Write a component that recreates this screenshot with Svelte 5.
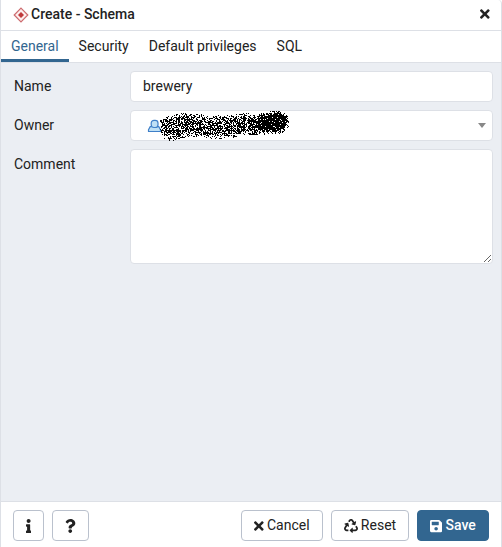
<script>
  const tabs = ['General', 'Security', 'Default privileges', 'SQL'];
  let active = $state('General');
  let name = $state('brewery');
  let comment = $state('');

  const icons = {
    close: { w: 352, d: 'M242.72 256l100.07-100.07c12.28-12.28 12.28-32.19 0-44.48l-22.24-22.24c-12.28-12.28-32.19-12.28-44.48 0L176 189.28 75.93 89.21c-12.28-12.28-32.19-12.28-44.48 0L9.21 111.45c-12.28 12.28-12.28 32.19 0 44.48L109.28 256 9.21 356.07c-12.28 12.28-12.28 32.19 0 44.48l22.24 22.24c12.28 12.28 32.2 12.28 44.48 0L176 322.72l100.07 100.07c12.28 12.28 32.2 12.28 44.48 0l22.24-22.24c12.28-12.28 12.28-32.19 0-44.48L242.72 256z' },
    save: { w: 448, d: 'M433.941 129.941l-83.882-83.882A48 48 0 0 0 316.118 32H48C21.49 32 0 53.49 0 80v352c0 26.51 21.49 48 48 48h352c26.51 0 48-21.49 48-48V163.882a48 48 0 0 0-14.059-33.941zM224 416c-35.346 0-64-28.654-64-64 0-35.346 28.654-64 64-64s64 28.654 64 64c0 35.346-28.654 64-64 64zm96-304.52V212c0 6.627-5.373 12-12 12H76c-6.627 0-12-5.373-12-12V108c0-6.627 5.373-12 12-12h228.52c3.183 0 6.235 1.264 8.485 3.515l3.48 3.48A11.996 11.996 0 0 1 320 111.48z' },
    info: { w: 192, d: 'M20 424.229h20V279.771H20c-11.046 0-20-8.954-20-20V212c0-11.046 8.954-20 20-20h112c11.046 0 20 8.954 20 20v212.229h20c11.046 0 20 8.954 20 20V492c0 11.046-8.954 20-20 20H20c-11.046 0-20-8.954-20-20v-47.771c0-11.046 8.954-20 20-20zM96 0C56.235 0 24 32.235 24 72s32.235 72 72 72 72-32.235 72-72S135.764 0 96 0z' },
    help: { w: 384, d: 'M202.021 0C122.202 0 70.503 32.703 29.914 91.026c-7.363 10.58-5.093 25.086 5.178 32.874l43.138 32.709c10.373 7.865 25.132 6.026 33.253-4.148 25.049-31.381 43.63-49.449 82.757-49.449 30.764 0 68.816 19.799 68.816 49.631 0 22.552-18.617 34.134-48.993 51.164-35.423 19.86-82.299 44.576-82.299 106.405V320c0 13.255 10.745 24 24 24h72.471c13.255 0 24-10.745 24-24v-5.773c0-42.86 125.268-44.645 125.268-160.627C377.504 66.256 286.902 0 202.021 0zM192 373.459c-38.196 0-69.271 31.075-69.271 69.271 0 38.195 31.075 69.27 69.271 69.27s69.271-31.075 69.271-69.271-31.075-69.27-69.271-69.27z' },
    reset: { w: 512, d: 'M184.561 261.903c3.232 13.997-12.123 24.635-24.068 17.168l-40.736-25.455-50.867 81.402C55.606 356.273 70.96 384 96.012 384H148c6.627 0 12 5.373 12 12v40c0 6.627-5.373 12-12 12H96.115c-75.334 0-121.302-83.048-81.408-146.88l50.822-81.388-40.725-25.448c-12.081-7.547-8.966-25.961 4.879-29.158l110.237-25.45c8.611-1.988 17.201 3.381 19.189 11.99l25.452 110.237zm98.561-182.915l41.289 66.076-40.74 25.457c-12.051 7.528-9 25.953 4.879 29.158l110.237 25.45c8.672 1.999 17.215-3.438 19.189-11.99l25.45-110.237c3.197-13.844-11.99-24.719-24.068-17.168l-40.687 25.424-41.263-66.082c-37.521-60.033-125.209-60.171-162.816 0l-17.963 28.766c-3.51 5.62-1.8 13.021 3.82 16.533l33.919 21.195c5.62 3.512 13.024 1.803 16.536-3.817l17.961-28.743c12.712-20.341 41.973-19.676 54.257-.022zM497.288 301.12l-27.515-44.065c-3.511-5.623-10.916-7.334-16.538-3.821l-33.861 21.159c-5.62 3.512-7.33 10.915-3.818 16.536l27.564 44.112c13.257 21.211-2.057 48.96-27.136 48.96H320V336.02c0-14.213-17.242-21.383-27.313-11.313l-80 79.981c-6.249 6.248-6.249 16.379 0 22.627l80 79.989C302.689 517.308 320 510.3 320 495.989V448h95.88c75.274 0 121.335-82.997 81.408-146.88z' }
  };

  // Outline of the spray that hides the owner: [x, top, bottom]
  const outline = [
    [0, 10, 21], [4, 7, 29], [12, 5, 31], [20, 3, 28], [30, 3, 26], [42, 4, 27],
    [54, 5, 29], [64, 5, 28], [74, 4, 27], [84, 2, 25], [96, 3, 25], [106, 2, 24],
    [114, 0, 24], [122, 1, 23], [126, 4, 19], [129, 9, 15]
  ];

  function spray() {
    let seed = 7321;
    const random = () => {
      seed = (seed * 1664525 + 1013904223) >>> 0;
      return seed / 4294967296;
    };
    let d = '';
    for (let i = 1; i < outline.length; i++) {
      const [x0, t0, b0] = outline[i - 1];
      const [x1, t1, b1] = outline[i];
      for (let x = x0; x < x1; x++) {
        const k = (x - x0) / (x1 - x0);
        const top = t0 + (t1 - t0) * k;
        const bottom = b0 + (b1 - b0) * k;
        for (let y = Math.ceil(top); y < bottom; y++) {
          const edge = Math.min(y - top + 0.6, bottom - y);
          let density = Math.min(0.68, 0.22 + edge * 0.07);
          if (Math.hypot(x - 111, y - 12) < 14) density = Math.min(0.93, 0.3 + edge * 0.12);
          if (random() < density) d += `M${x} ${y}h1v1h-1z`;
        }
      }
    }
    return d;
  }
  const sprayPath = spray();
</script>

{#snippet icon(key, size)}
  <svg class="icon" viewBox="0 0 {icons[key].w} 512" height={size} width={(size * icons[key].w) / 512} aria-hidden="true">
    <path d={icons[key].d} fill="currentColor" />
  </svg>
{/snippet}

<div class="dialog">
  <header>
    <svg class="schema" width="16" height="16" viewBox="0 0 16 16" aria-hidden="true">
      <path d="M8 1.2 14.8 8 8 14.8 1.2 8z" fill="#fdeeee" stroke="#cd6b6e" stroke-width="1.2" />
      <path d="M8 5 11 8 8 11 5 8z" fill="#c0393b" />
    </svg>
    <h1>Create - Schema</h1>
    <button class="close" aria-label="Close">{@render icon('close', 14)}</button>
  </header>

  <nav>
    {#each tabs as tab}
      <button class:active={active === tab} onclick={() => (active = tab)}>{tab}</button>
    {/each}
  </nav>

  <main>
    <div class="row">
      <label for="name">Name</label>
      <input id="name" class="control" bind:value={name} />
    </div>
    <div class="row">
      <span class="label">Owner</span>
      <div class="control select">
        <svg class="user" width="15" height="14" viewBox="0 0 15 14" aria-hidden="true">
          <path d="M1.5 12.5V10.8L3.2 7.6H11.8L13.5 10.8V12.5z" fill="#bfe0f5" stroke="#3f7fc8" stroke-width="1.2" stroke-linejoin="round" />
          <rect x="4.2" y="1.3" width="6.8" height="7.2" rx="2.8" fill="#bfe0f5" stroke="#3f7fc8" stroke-width="1.2" />
        </svg>
        <svg class="spray" width="130" height="32" viewBox="0 0 130 32" shape-rendering="crispEdges" aria-hidden="true">
          <path d={sprayPath} fill="#000" />
        </svg>
        <span class="caret"></span>
      </div>
    </div>
    <div class="row">
      <label for="comment">Comment</label>
      <textarea id="comment" class="control" bind:value={comment}></textarea>
    </div>
  </main>

  <footer>
    <button class="btn info" aria-label="Information">{@render icon('info', 14)}</button>
    <button class="btn help" aria-label="Help">{@render icon('help', 14)}</button>
    <span class="spacer"></span>
    <button class="btn cancel">{@render icon('close', 14)}<span>Cancel</span></button>
    <button class="btn reset">{@render icon('reset', 14)}<span>Reset</span></button>
    <button class="btn save">{@render icon('save', 14)}<span>Save</span></button>
  </footer>
</div>

<style>
  .dialog {
    box-sizing: border-box;
    width: 502px;
    height: 547px;
    display: flex;
    flex-direction: column;
    border: solid #dde0e6;
    border-width: 0 1px;
    border-top-right-radius: 4px;
    background: #fff;
    color: #222;
    font: 14px/21px Roboto, sans-serif;
    overflow: hidden;
  }
  .dialog * { box-sizing: border-box; }
  button { font: inherit; color: inherit; cursor: pointer; }
  .icon { display: block; flex: none; }
  header {
    flex: none;
    height: 31px;
    display: flex;
    align-items: center;
    padding: 0 11px 2px 12px;
    border-bottom: 1px solid #dde0e6;
  }
  .schema { margin: 2px 2px 0 0; }
  h1 { margin: 0; flex: 1; font-size: 14px; line-height: 21px; font-weight: 500; letter-spacing: 0; }
  .close { padding: 0; border: 0; background: none; }
  nav {
    flex: none;
    height: 32px;
    display: flex;
    border-bottom: 1px solid #dde0e6;
  }
  nav button {
    padding: 2px 10px 0;
    border: 0;
    border-bottom: 3px solid transparent;
    background: none;
    line-height: 26px;
  }
  nav .active { color: #326690; border-bottom-color: #326690; }
  main {
    flex: 1;
    display: flex;
    flex-direction: column;
    gap: 8px;
    padding: 8px 8px 0 13px;
    background: #ebeef3;
  }
  .row { display: flex; align-items: flex-start; }
  label, .label { width: 116px; flex: none; line-height: 30px; }
  .control {
    flex: 1;
    min-width: 0;
    height: 31px;
    margin: 0;
    padding: 0 12px 1px;
    border: 1px solid #dde0e6;
    border-radius: 4px;
    background: #fff;
    color: #222;
    font: inherit;
    outline: 0;
  }
  textarea.control { height: 115px; resize: both; }
  .select { position: relative; display: flex; align-items: center; justify-content: flex-end; padding: 0 6px; }
  .user { position: absolute; left: 16px; top: 8px; }
  .spray { position: absolute; left: 29px; top: -1px; }
  .caret {
    border: 4px solid transparent;
    border-top: 5px solid #888;
    border-bottom: 0;
  }
  footer {
    flex: none;
    height: 46px;
    display: flex;
    align-items: flex-start;
    padding: 8px 12px 0;
    border-top: 1px solid #dde0e6;
  }
  .spacer { flex: 1; }
  .btn {
    height: 31px;
    display: flex;
    align-items: center;
    justify-content: center;
    gap: 3px;
    padding: 0;
    border: 1px solid #bac1cd;
    border-radius: 4px;
    background: #fff;
  }
  .info { width: 31px; margin-right: 8px; }
  .help { width: 37px; }
  .cancel { width: 82px; margin-right: 8px; }
  .reset { width: 78px; margin-right: 8px; }
  .save { width: 72px; border-color: #326690; background: #326690; color: #fff; font-weight: 500; }
</style>
